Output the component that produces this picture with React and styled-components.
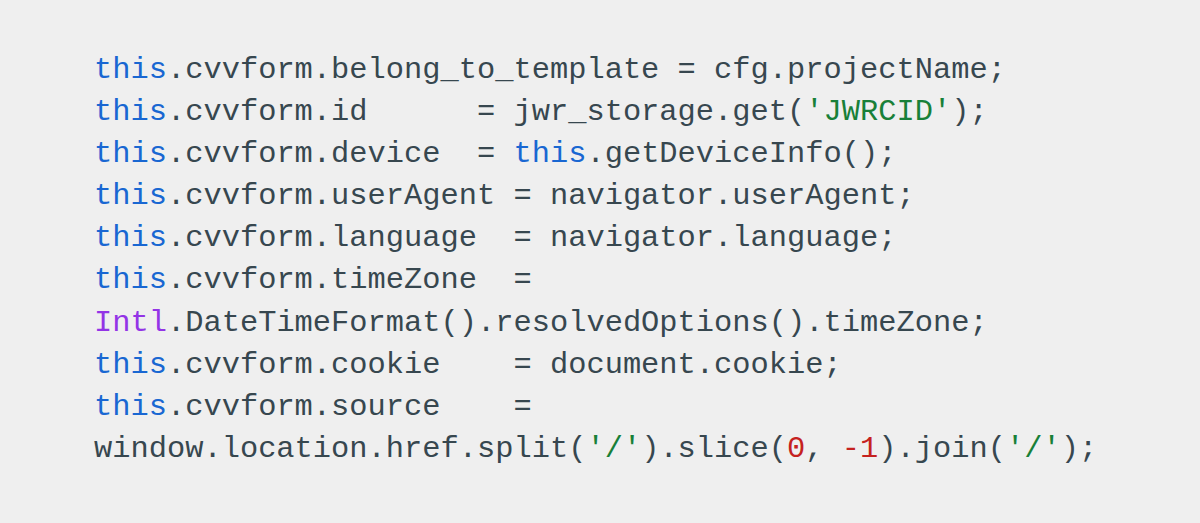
import React from "react";
import styled, { createGlobalStyle } from "styled-components";

const GlobalStyle = createGlobalStyle`
	html, body {
		margin: 0;
		padding: 0;
		background: #efefef;
	}
`;

const Page = styled.div`
	width: 1200px;
	height: 523px;
	background: #efefef;
	box-sizing: border-box;
	padding: 49px 0 0 94px;
`;

const Code = styled.pre`
	margin: 0;
	font-family: "Liberation Mono", "DejaVu Sans Mono", monospace;
	font-size: 30.4px;
	line-height: 42.1px;
	color: #37474f;
	white-space: pre;
`;

const Tok = styled.span`
	color: ${(p) =>
		p.kind === "kw"
			? "#1967d2"
			: p.kind === "type"
			? "#9334e6"
			: p.kind === "str"
			? "#188038"
			: p.kind === "num"
			? "#c5221f"
			: "inherit"};
`;

const lines = [
	[["kw", "this"], ["", ".cvvform.belong_to_template = cfg.projectName;"]],
	[["kw", "this"], ["", ".cvvform.id      = jwr_storage.get("], ["str", "'JWRCID'"], ["", ");"]],
	[["kw", "this"], ["", ".cvvform.device  = "], ["kw", "this"], ["", ".getDeviceInfo();"]],
	[["kw", "this"], ["", ".cvvform.userAgent = navigator.userAgent;"]],
	[["kw", "this"], ["", ".cvvform.language  = navigator.language;"]],
	[["kw", "this"], ["", ".cvvform.timeZone  ="]],
	[["type", "Intl"], ["", ".DateTimeFormat().resolvedOptions().timeZone;"]],
	[["kw", "this"], ["", ".cvvform.cookie    = document.cookie;"]],
	[["kw", "this"], ["", ".cvvform.source    ="]],
	[
		["", "window.location.href.split("],
		["str", "'/'"],
		["", ").slice("],
		["num", "0"],
		["", ", "],
		["num", "-1"],
		["", ").join("],
		["str", "'/'"],
		["", ");"],
	],
];

const App = () => {
	return (
		<Page>
			<GlobalStyle />
			<Code>
				{lines.map((line, i) => (
					<div key={i}>
						{line.map(([kind, text], j) => (
							<Tok key={j} kind={kind}>
								{text}
							</Tok>
						))}
					</div>
				))}
			</Code>
		</Page>
	);
};

export default App;
